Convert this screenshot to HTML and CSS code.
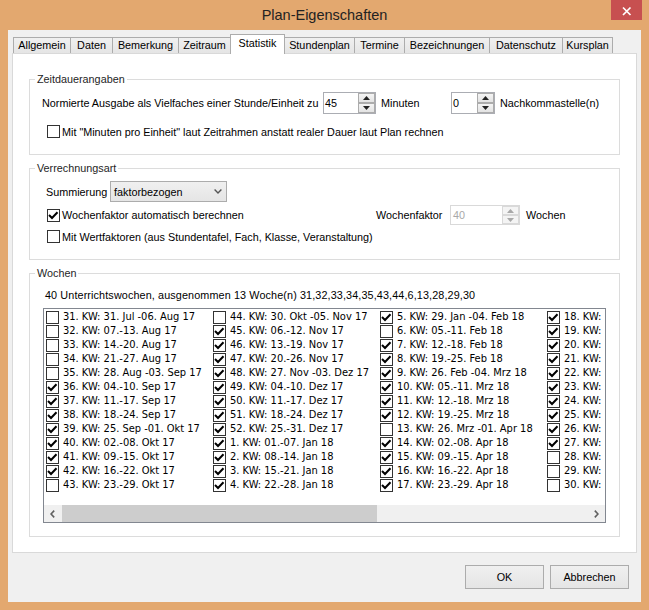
FILE: index.html
```html
<!DOCTYPE html>
<html lang="de">
<head>
<meta charset="utf-8">
<title>Plan-Eigenschaften</title>
<link rel="stylesheet" href="styles.css">
</head>
<body>
<div class="window">
  <header class="titlebar">
    <h1 class="title">Plan-Eigenschaften</h1>
    <button class="close" aria-label="Schließen"><svg width="31" height="20" viewBox="0 0 31 20"><path d="M12 7.5 L19.5 15 M19.5 7.5 L12 15"/></svg></button>
  </header>
  <div class="client">
    <nav class="tabs">
      <div class="tab">Allgemein</div>
      <div class="tab">Daten</div>
      <div class="tab">Bemerkung</div>
      <div class="tab">Zeitraum</div>
      <div class="tab active">Statistik</div>
      <div class="tab">Stundenplan</div>
      <div class="tab">Termine</div>
      <div class="tab">Bezeichnungen</div>
      <div class="tab">Datenschutz</div>
      <div class="tab">Kursplan</div>
    </nav>
    <div class="panel">
      <section class="group g1">
        <div class="gtitle">Zeitdauerangaben</div>
        <div class="row r-spin">
          <span class="lbl-norm">Normierte Ausgabe als Vielfaches einer Stunde/Einheit zu</span>
          <div class="spin s45"><span class="val">45</span><span class="btns"><span class="sb"><svg width="7" height="4" viewBox="0 0 7 4"><path d="M0 4 L3.5 0 L7 4Z"/></svg></span><span class="sb"><svg width="7" height="4" viewBox="0 0 7 4"><path d="M0 0 L3.5 4 L7 0Z"/></svg></span></span></div>
          <span class="lbl-min">Minuten</span>
          <div class="spin s0"><span class="val">0</span><span class="btns"><span class="sb"><svg width="7" height="4" viewBox="0 0 7 4"><path d="M0 4 L3.5 0 L7 4Z"/></svg></span><span class="sb"><svg width="7" height="4" viewBox="0 0 7 4"><path d="M0 0 L3.5 4 L7 0Z"/></svg></span></span></div>
          <span class="lbl-nk">Nachkommastelle(n)</span>
        </div>
        <div class="cbrow r-g1">
          <span class="cb"></span><span class="cbl">Mit "Minuten pro Einheit" laut Zeitrahmen anstatt realer Dauer laut Plan rechnen</span>
        </div>
      </section>

      <section class="group g2">
        <div class="gtitle">Verrechnungsart</div>
        <div class="row r-combo">
          <span class="lbl-summ">Summierung</span>
          <div class="combo"><span>faktorbezogen</span><svg width="8" height="5" viewBox="0 0 8 5"><path d="M0.6 0.6 L4 4 L7.4 0.6"/></svg></div>
        </div>
        <div class="row r-wf">
          <div class="wf-check"><span class="cb on"><svg viewBox="0 0 11 11"><path d="M1 5 L4 8 L9.5 2.2"/></svg></span><span class="cbl">Wochenfaktor automatisch berechnen</span></div>
          <span class="lbl-wf">Wochenfaktor</span>
          <div class="spin dis"><span class="val">40</span><span class="btns"><span class="sb"><svg width="7" height="4" viewBox="0 0 7 4"><path d="M0 4 L3.5 0 L7 4Z"/></svg></span><span class="sb"><svg width="7" height="4" viewBox="0 0 7 4"><path d="M0 0 L3.5 4 L7 0Z"/></svg></span></span></div>
          <span class="lbl-wochen">Wochen</span>
        </div>
        <div class="cbrow r-g2">
          <span class="cb"></span><span class="cbl">Mit Wertfaktoren (aus Stundentafel, Fach, Klasse, Veranstaltung)</span>
        </div>
      </section>

      <section class="group g3">
        <div class="gtitle">Wochen</div>
        <div class="summary">40 Unterrichtswochen, ausgenommen 13 Woche(n) 31,32,33,34,35,43,44,6,13,28,29,30</div>
        <div class="listbox">
          <div class="items">
            <div class="item"><span class="cb"></span><span class="t">31. KW: 31. Jul -06. Aug 17</span></div>
            <div class="item"><span class="cb"></span><span class="t">32. KW: 07.-13. Aug 17</span></div>
            <div class="item"><span class="cb"></span><span class="t">33. KW: 14.-20. Aug 17</span></div>
            <div class="item"><span class="cb"></span><span class="t">34. KW: 21.-27. Aug 17</span></div>
            <div class="item"><span class="cb"></span><span class="t">35. KW: 28. Aug -03. Sep 17</span></div>
            <div class="item"><span class="cb on"><svg viewBox="0 0 11 11"><path d="M1 5 L4 8 L9.5 2.2"/></svg></span><span class="t">36. KW: 04.-10. Sep 17</span></div>
            <div class="item"><span class="cb on"><svg viewBox="0 0 11 11"><path d="M1 5 L4 8 L9.5 2.2"/></svg></span><span class="t">37. KW: 11.-17. Sep 17</span></div>
            <div class="item"><span class="cb on"><svg viewBox="0 0 11 11"><path d="M1 5 L4 8 L9.5 2.2"/></svg></span><span class="t">38. KW: 18.-24. Sep 17</span></div>
            <div class="item"><span class="cb on"><svg viewBox="0 0 11 11"><path d="M1 5 L4 8 L9.5 2.2"/></svg></span><span class="t">39. KW: 25. Sep -01. Okt 17</span></div>
            <div class="item"><span class="cb on"><svg viewBox="0 0 11 11"><path d="M1 5 L4 8 L9.5 2.2"/></svg></span><span class="t">40. KW: 02.-08. Okt 17</span></div>
            <div class="item"><span class="cb on"><svg viewBox="0 0 11 11"><path d="M1 5 L4 8 L9.5 2.2"/></svg></span><span class="t">41. KW: 09.-15. Okt 17</span></div>
            <div class="item"><span class="cb on"><svg viewBox="0 0 11 11"><path d="M1 5 L4 8 L9.5 2.2"/></svg></span><span class="t">42. KW: 16.-22. Okt 17</span></div>
            <div class="item"><span class="cb"></span><span class="t">43. KW: 23.-29. Okt 17</span></div>

            <div class="item"><span class="cb"></span><span class="t">44. KW: 30. Okt -05. Nov 17</span></div>
            <div class="item"><span class="cb on"><svg viewBox="0 0 11 11"><path d="M1 5 L4 8 L9.5 2.2"/></svg></span><span class="t">45. KW: 06.-12. Nov 17</span></div>
            <div class="item"><span class="cb on"><svg viewBox="0 0 11 11"><path d="M1 5 L4 8 L9.5 2.2"/></svg></span><span class="t">46. KW: 13.-19. Nov 17</span></div>
            <div class="item"><span class="cb on"><svg viewBox="0 0 11 11"><path d="M1 5 L4 8 L9.5 2.2"/></svg></span><span class="t">47. KW: 20.-26. Nov 17</span></div>
            <div class="item"><span class="cb on"><svg viewBox="0 0 11 11"><path d="M1 5 L4 8 L9.5 2.2"/></svg></span><span class="t">48. KW: 27. Nov -03. Dez 17</span></div>
            <div class="item"><span class="cb on"><svg viewBox="0 0 11 11"><path d="M1 5 L4 8 L9.5 2.2"/></svg></span><span class="t">49. KW: 04.-10. Dez 17</span></div>
            <div class="item"><span class="cb on"><svg viewBox="0 0 11 11"><path d="M1 5 L4 8 L9.5 2.2"/></svg></span><span class="t">50. KW: 11.-17. Dez 17</span></div>
            <div class="item"><span class="cb on"><svg viewBox="0 0 11 11"><path d="M1 5 L4 8 L9.5 2.2"/></svg></span><span class="t">51. KW: 18.-24. Dez 17</span></div>
            <div class="item"><span class="cb on"><svg viewBox="0 0 11 11"><path d="M1 5 L4 8 L9.5 2.2"/></svg></span><span class="t">52. KW: 25.-31. Dez 17</span></div>
            <div class="item"><span class="cb on"><svg viewBox="0 0 11 11"><path d="M1 5 L4 8 L9.5 2.2"/></svg></span><span class="t">1. KW: 01.-07. Jan 18</span></div>
            <div class="item"><span class="cb on"><svg viewBox="0 0 11 11"><path d="M1 5 L4 8 L9.5 2.2"/></svg></span><span class="t">2. KW: 08.-14. Jan 18</span></div>
            <div class="item"><span class="cb on"><svg viewBox="0 0 11 11"><path d="M1 5 L4 8 L9.5 2.2"/></svg></span><span class="t">3. KW: 15.-21. Jan 18</span></div>
            <div class="item"><span class="cb on"><svg viewBox="0 0 11 11"><path d="M1 5 L4 8 L9.5 2.2"/></svg></span><span class="t">4. KW: 22.-28. Jan 18</span></div>

            <div class="item"><span class="cb on"><svg viewBox="0 0 11 11"><path d="M1 5 L4 8 L9.5 2.2"/></svg></span><span class="t">5. KW: 29. Jan -04. Feb 18</span></div>
            <div class="item"><span class="cb"></span><span class="t">6. KW: 05.-11. Feb 18</span></div>
            <div class="item"><span class="cb on"><svg viewBox="0 0 11 11"><path d="M1 5 L4 8 L9.5 2.2"/></svg></span><span class="t">7. KW: 12.-18. Feb 18</span></div>
            <div class="item"><span class="cb on"><svg viewBox="0 0 11 11"><path d="M1 5 L4 8 L9.5 2.2"/></svg></span><span class="t">8. KW: 19.-25. Feb 18</span></div>
            <div class="item"><span class="cb on"><svg viewBox="0 0 11 11"><path d="M1 5 L4 8 L9.5 2.2"/></svg></span><span class="t">9. KW: 26. Feb -04. Mrz 18</span></div>
            <div class="item"><span class="cb on"><svg viewBox="0 0 11 11"><path d="M1 5 L4 8 L9.5 2.2"/></svg></span><span class="t">10. KW: 05.-11. Mrz 18</span></div>
            <div class="item"><span class="cb on"><svg viewBox="0 0 11 11"><path d="M1 5 L4 8 L9.5 2.2"/></svg></span><span class="t">11. KW: 12.-18. Mrz 18</span></div>
            <div class="item"><span class="cb on"><svg viewBox="0 0 11 11"><path d="M1 5 L4 8 L9.5 2.2"/></svg></span><span class="t">12. KW: 19.-25. Mrz 18</span></div>
            <div class="item"><span class="cb"></span><span class="t">13. KW: 26. Mrz -01. Apr 18</span></div>
            <div class="item"><span class="cb on"><svg viewBox="0 0 11 11"><path d="M1 5 L4 8 L9.5 2.2"/></svg></span><span class="t">14. KW: 02.-08. Apr 18</span></div>
            <div class="item"><span class="cb on"><svg viewBox="0 0 11 11"><path d="M1 5 L4 8 L9.5 2.2"/></svg></span><span class="t">15. KW: 09.-15. Apr 18</span></div>
            <div class="item"><span class="cb on"><svg viewBox="0 0 11 11"><path d="M1 5 L4 8 L9.5 2.2"/></svg></span><span class="t">16. KW: 16.-22. Apr 18</span></div>
            <div class="item"><span class="cb on"><svg viewBox="0 0 11 11"><path d="M1 5 L4 8 L9.5 2.2"/></svg></span><span class="t">17. KW: 23.-29. Apr 18</span></div>

            <div class="item"><span class="cb on"><svg viewBox="0 0 11 11"><path d="M1 5 L4 8 L9.5 2.2"/></svg></span><span class="t">18. KW:</span></div>
            <div class="item"><span class="cb on"><svg viewBox="0 0 11 11"><path d="M1 5 L4 8 L9.5 2.2"/></svg></span><span class="t">19. KW:</span></div>
            <div class="item"><span class="cb on"><svg viewBox="0 0 11 11"><path d="M1 5 L4 8 L9.5 2.2"/></svg></span><span class="t">20. KW:</span></div>
            <div class="item"><span class="cb on"><svg viewBox="0 0 11 11"><path d="M1 5 L4 8 L9.5 2.2"/></svg></span><span class="t">21. KW:</span></div>
            <div class="item"><span class="cb on"><svg viewBox="0 0 11 11"><path d="M1 5 L4 8 L9.5 2.2"/></svg></span><span class="t">22. KW:</span></div>
            <div class="item"><span class="cb on"><svg viewBox="0 0 11 11"><path d="M1 5 L4 8 L9.5 2.2"/></svg></span><span class="t">23. KW:</span></div>
            <div class="item"><span class="cb on"><svg viewBox="0 0 11 11"><path d="M1 5 L4 8 L9.5 2.2"/></svg></span><span class="t">24. KW:</span></div>
            <div class="item"><span class="cb on"><svg viewBox="0 0 11 11"><path d="M1 5 L4 8 L9.5 2.2"/></svg></span><span class="t">25. KW:</span></div>
            <div class="item"><span class="cb on"><svg viewBox="0 0 11 11"><path d="M1 5 L4 8 L9.5 2.2"/></svg></span><span class="t">26. KW:</span></div>
            <div class="item"><span class="cb on"><svg viewBox="0 0 11 11"><path d="M1 5 L4 8 L9.5 2.2"/></svg></span><span class="t">27. KW:</span></div>
            <div class="item"><span class="cb"></span><span class="t">28. KW:</span></div>
            <div class="item"><span class="cb"></span><span class="t">29. KW:</span></div>
            <div class="item"><span class="cb"></span><span class="t">30. KW:</span></div>
          </div>
          <div class="hscroll">
            <span class="sbtn"><svg width="5" height="8" viewBox="0 0 5 8"><path d="M4.2 0.6 L1 4 L4.2 7.4"/></svg></span>
            <span class="thumb"></span>
            <span class="track"></span>
            <span class="sbtn"><svg width="5" height="8" viewBox="0 0 5 8"><path d="M0.8 0.6 L4 4 L0.8 7.4"/></svg></span>
          </div>
        </div>
      </section>
    </div>
    <footer class="footer">
      <button class="btn">OK</button>
      <button class="btn">Abbrechen</button>
    </footer>
  </div>
</div>
</body>
</html>
```

FILE: styles.css
```css
* { box-sizing: border-box; }
html, body { margin: 0; padding: 0; }
body {
  width: 649px;
  height: 610px;
  overflow: hidden;
  background: #E3A86F;
  font-family: "Liberation Sans", Arial, sans-serif;
  font-size: 10.8px;
  color: #000;
}

.window { width: 649px; height: 610px; display: flex; flex-direction: column; }

/* title bar */
.titlebar {
  height: 30px;
  flex: none;
  display: grid;
  grid-template-columns: 1fr auto 1fr;
  align-items: start;
}
.title {
  grid-column: 2;
  margin: 0;
  font-size: 14.5px;
  font-weight: normal;
  line-height: 30px;
  color: #222;
}
.close {
  grid-column: 3;
  justify-self: end;
  width: 31px;
  height: 20px;
  margin: 0 7px 0 0;
  padding: 0;
  border: 0;
  background: #C75050;
  display: block;
}
.close svg { display: block; }
.close path { stroke: #fff; stroke-width: 1.7; fill: none; }

/* client area */
.client {
  width: 633px;
  height: 572px;
  margin-left: 8px;
  flex: none;
  background: #F0F0F0;
  padding: 4px 4px 0 4px;
  display: flex;
  flex-direction: column;
}

/* tabs */
.tabs {
  display: flex;
  align-items: flex-end;
  height: 20px;
  flex: none;
  margin: 0 0 -1px 1px;
  position: relative;
  z-index: 1;
}
.tab {
  height: 16px;
  margin: 0 0 1px -1px;
  border: 1px solid #ACACAC;
  border-bottom: 0;
  background: linear-gradient(#F0F0F0, #E5E5E5);
  text-align: center;
  line-height: 15px;
  white-space: nowrap;
  flex: none;
}
.tab:nth-child(1) { width: 58px; margin-left: 0; }
.tab:nth-child(2) { width: 43px; }
.tab:nth-child(3) { width: 67px; }
.tab:nth-child(4) { width: 53px; }
.tab:nth-child(5) { width: 55px; }
.tab:nth-child(6) { width: 71px; }
.tab:nth-child(7) { width: 51px; }
.tab:nth-child(8) { width: 86px; }
.tab:nth-child(9) { width: 74px; }
.tab:nth-child(10) { width: 51px; }
.tab.active {
  height: 20px;
  margin-bottom: 0;
  background: #fff;
  line-height: 16px;
  position: relative;
}

/* panel */
.panel {
  height: 500px;
  flex: none;
  border: 1px solid #D9D9D9;
  background: #fff;
  padding: 25px 16px 0 16px;
}

.group {
  border: 1px solid #DCDCDC;
  padding: 0 12px;
}
.g1 { height: 76px; }
.g2 { height: 92px; margin-top: 13px; }
.g3 { height: 264px; margin-top: 13px; }

.gtitle {
  display: table;
  height: 15px;
  line-height: 15px;
  margin: -8px 0 0 -7px;
  padding: 0 2px;
  background: #fff;
  color: #1E1E1E;
  white-space: nowrap;
}

.row { display: flex; align-items: center; white-space: nowrap; }

/* group 1 */
.r-spin { height: 22px; margin-top: 5px; }
.lbl-norm { width: 281px; flex: none; }
.lbl-min { width: 70px; margin-left: 5px; flex: none; }
.lbl-nk { margin-left: 5px; }

.spin {
  display: flex;
  height: 100%;
  flex: none;
  border: 1px solid #ABADB3;
  background: #fff;
}
.s45 { width: 53px; }
.s0 { width: 44px; }
.spin .val { flex: 1; padding-left: 1px; align-self: center; }
.spin .btns {
  width: 17px;
  display: flex;
  flex-direction: column;
}
.spin .sb {
  flex: 1;
  border: 1px solid #ACACAC;
  background: linear-gradient(#F4F4F4, #E3E3E3);
  display: flex;
  align-items: center;
  justify-content: center;
}
.spin .sb svg { display: block; }
.spin .sb path { fill: #222; }

.spin.dis { width: 70px; height: 20px; border-color: #D9D9D9; }
.spin.dis .val { color: #A8A8A8; padding-left: 2px; }
.spin.dis .sb { border-color: #D9D9D9; background: #F4F4F4; }
.spin.dis .sb path { fill: #A8A8A8; }

.cbrow { display: flex; align-items: center; height: 13px; margin-left: 5px; white-space: nowrap; }
.r-g1 { margin-top: 11px; }
.cbl { margin-left: 2px; }

.cb {
  display: block;
  flex: none;
  width: 13px;
  height: 13px;
  border: 1px solid #333;
  background: #fff;
}
.cb svg { display: block; width: 11px; height: 11px; }
.cb path { fill: none; stroke: #000; stroke-width: 2; }

/* group 2 */
.r-combo { height: 21px; margin-top: 5px; margin-left: 4px; }
.lbl-summ { width: 64px; flex: none; }
.combo {
  width: 117px;
  height: 21px;
  flex: none;
  border: 1px solid #ACACAC;
  background: linear-gradient(#F0F0F0, #E5E5E5);
  display: flex;
  align-items: center;
  justify-content: space-between;
  padding: 0 4px 0 3px;
}
.combo svg { display: block; }
.combo path { fill: none; stroke: #555; stroke-width: 1.4; }

.r-wf { height: 20px; margin-top: 3px; margin-left: 5px; }
.wf-check { width: 329px; flex: none; display: flex; align-items: center; }
.lbl-wf { width: 74px; flex: none; }
.lbl-wochen { margin-left: 6px; }
.r-g2 { margin-top: 5px; }

/* group 3 */
.summary {
  margin: 7px 0 0 3px;
  height: 14px;
  line-height: 14px;
  white-space: nowrap;
  letter-spacing: 0.12px;
}
.listbox {
  margin: 6px 0 0 1px;
  width: 563px;
  height: 215px;
  border: 1px solid #828790;
  background: #fff;
  display: flex;
  flex-direction: column;
}
.items {
  height: 196px;
  flex: none;
  overflow: hidden;
  display: grid;
  grid-auto-flow: column;
  grid-template-rows: repeat(13, 14px);
  grid-auto-columns: 167px;
  align-content: start;
  padding: 1px 0 0 2px;
}
.item {
  display: flex;
  align-items: flex-start;
  white-space: nowrap;
  font-family: "DejaVu Sans Condensed", "DejaVu Sans", sans-serif;
  font-size: 11px;
  line-height: 14px;
}
.item .cb { margin-top: 1px; }
.item .t { margin-left: 4px; }

.hscroll {
  height: 17px;
  flex: none;
  display: flex;
  background: #F0F0F0;
}
.sbtn {
  width: 17px;
  flex: none;
  display: flex;
  align-items: center;
  justify-content: center;
}
.sbtn svg { display: block; }
.sbtn path { fill: none; stroke: #606060; stroke-width: 1.6; }
.thumb { width: 315px; margin-left: 1px; flex: none; background: #CDCDCD; }
.track { flex: 1; }

/* footer */
.footer {
  display: flex;
  justify-content: flex-end;
  gap: 6px;
  margin-top: 12px;
  padding-right: 8px;
  flex: none;
}
.btn {
  width: 79px;
  height: 24px;
  padding: 0;
  border: 1px solid #ACACAC;
  background: linear-gradient(#F0F0F0, #E5E5E5);
  font: inherit;
  color: #000;
}
```
